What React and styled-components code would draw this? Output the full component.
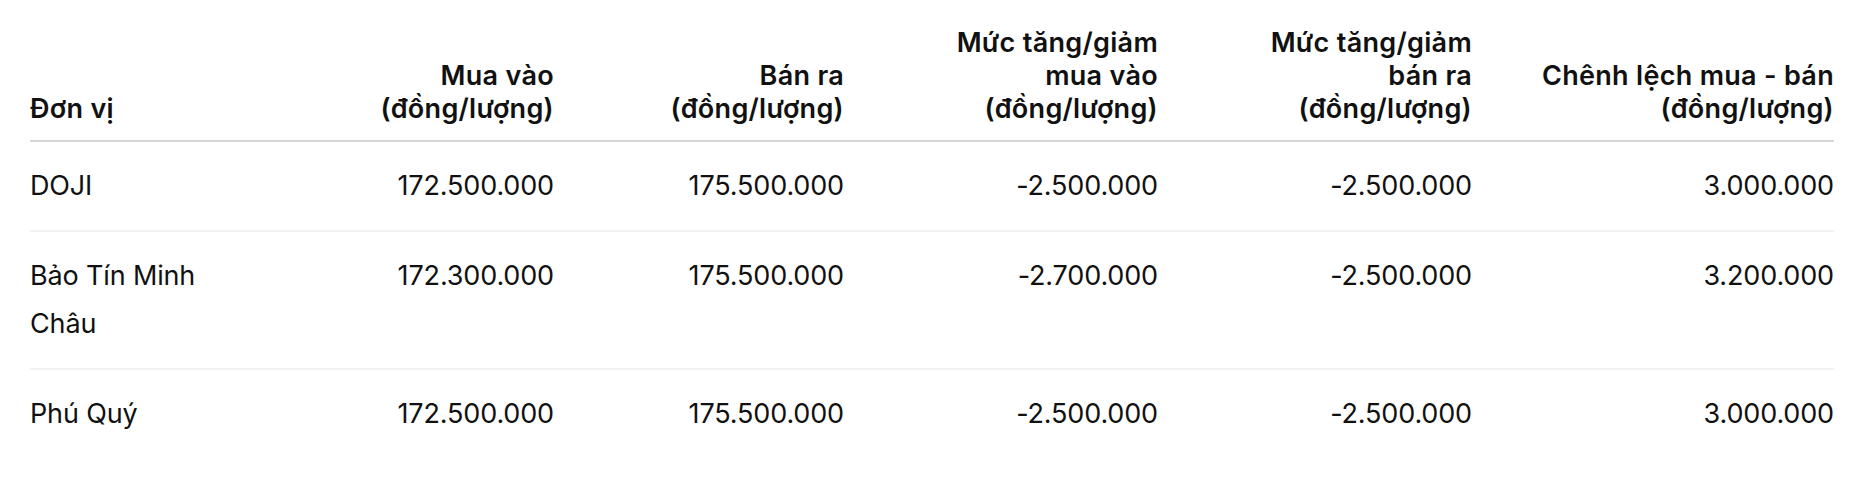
import React from "react";
import styled, { createGlobalStyle } from "styled-components";

const GlobalStyle = createGlobalStyle`
  * {
    box-sizing: border-box;
  }

  body {
    margin: 0;
    background: #ffffff;
    font-family: Inter, "Noto Sans", "Liberation Sans", sans-serif;
    color: #111111;
  }
`;

// columns: width in px, alignment, header lines
const columns = [
  { width: 220, align: "left", lines: ["Đơn vị"] },
  { width: 304, align: "right", lines: ["Mua vào", "(đồng/lượng)"] },
  { width: 290, align: "right", lines: ["Bán ra", "(đồng/lượng)"] },
  {
    width: 314,
    align: "right",
    lines: ["Mức tăng/giảm", "mua vào", "(đồng/lượng)"]
  },
  {
    width: 314,
    align: "right",
    lines: ["Mức tăng/giảm", "bán ra", "(đồng/lượng)"]
  },
  { width: 362, align: "right", lines: ["Chênh lệch mua - bán", "(đồng/lượng)"] }
];

const rows = [
  ["DOJI", "172.500.000", "175.500.000", "-2.500.000", "-2.500.000", "3.000.000"],
  [
    "Bảo Tín Minh Châu",
    "172.300.000",
    "175.500.000",
    "-2.700.000",
    "-2.500.000",
    "3.200.000"
  ],
  ["Phú Quý", "172.500.000", "175.500.000", "-2.500.000", "-2.500.000", "3.000.000"]
];

const Page = styled.div`
  padding: 26px 30px 0 30px;
`;

const Table = styled.table`
  width: 1804px;
  border-collapse: collapse;
  table-layout: fixed;
`;

const HeadCell = styled.th`
  text-align: ${(p) => p.$align};
  vertical-align: bottom;
  padding: 0 0 15px ${(p) => (p.$align === "left" ? "0" : "16px")};
  font-size: 27px;
  font-weight: 600;
  line-height: 33px;
  letter-spacing: 0.3px;
  border-bottom: 2px solid #d6d6d6;
`;

const HeadLine = styled.span`
  display: block;
  white-space: nowrap;
`;

const Row = styled.tr`
  border-bottom: 2px solid #f1f1f1;

  &:last-child {
    border-bottom: none;
  }
`;

const Cell = styled.td`
  text-align: ${(p) => p.$align};
  vertical-align: top;
  padding: 20px 0 20px ${(p) => (p.$align === "left" ? "0" : "16px")};
  font-size: 27px;
  font-weight: 400;
  line-height: 48px;
  letter-spacing: -0.15px;
`;

export default function App() {
  return (
    <Page>
      <GlobalStyle />
      <Table>
        <colgroup>
          {columns.map((c, i) => (
            <col key={i} style={{ width: c.width }} />
          ))}
        </colgroup>
        <thead>
          <tr>
            {columns.map((c, i) => (
              <HeadCell key={i} $align={c.align}>
                {c.lines.map((line, j) => (
                  <HeadLine key={j}>{line}</HeadLine>
                ))}
              </HeadCell>
            ))}
          </tr>
        </thead>
        <tbody>
          {rows.map((row, i) => (
            <Row key={i}>
              {row.map((value, j) => (
                <Cell key={j} $align={columns[j].align}>
                  {value}
                </Cell>
              ))}
            </Row>
          ))}
        </tbody>
      </Table>
    </Page>
  );
}
